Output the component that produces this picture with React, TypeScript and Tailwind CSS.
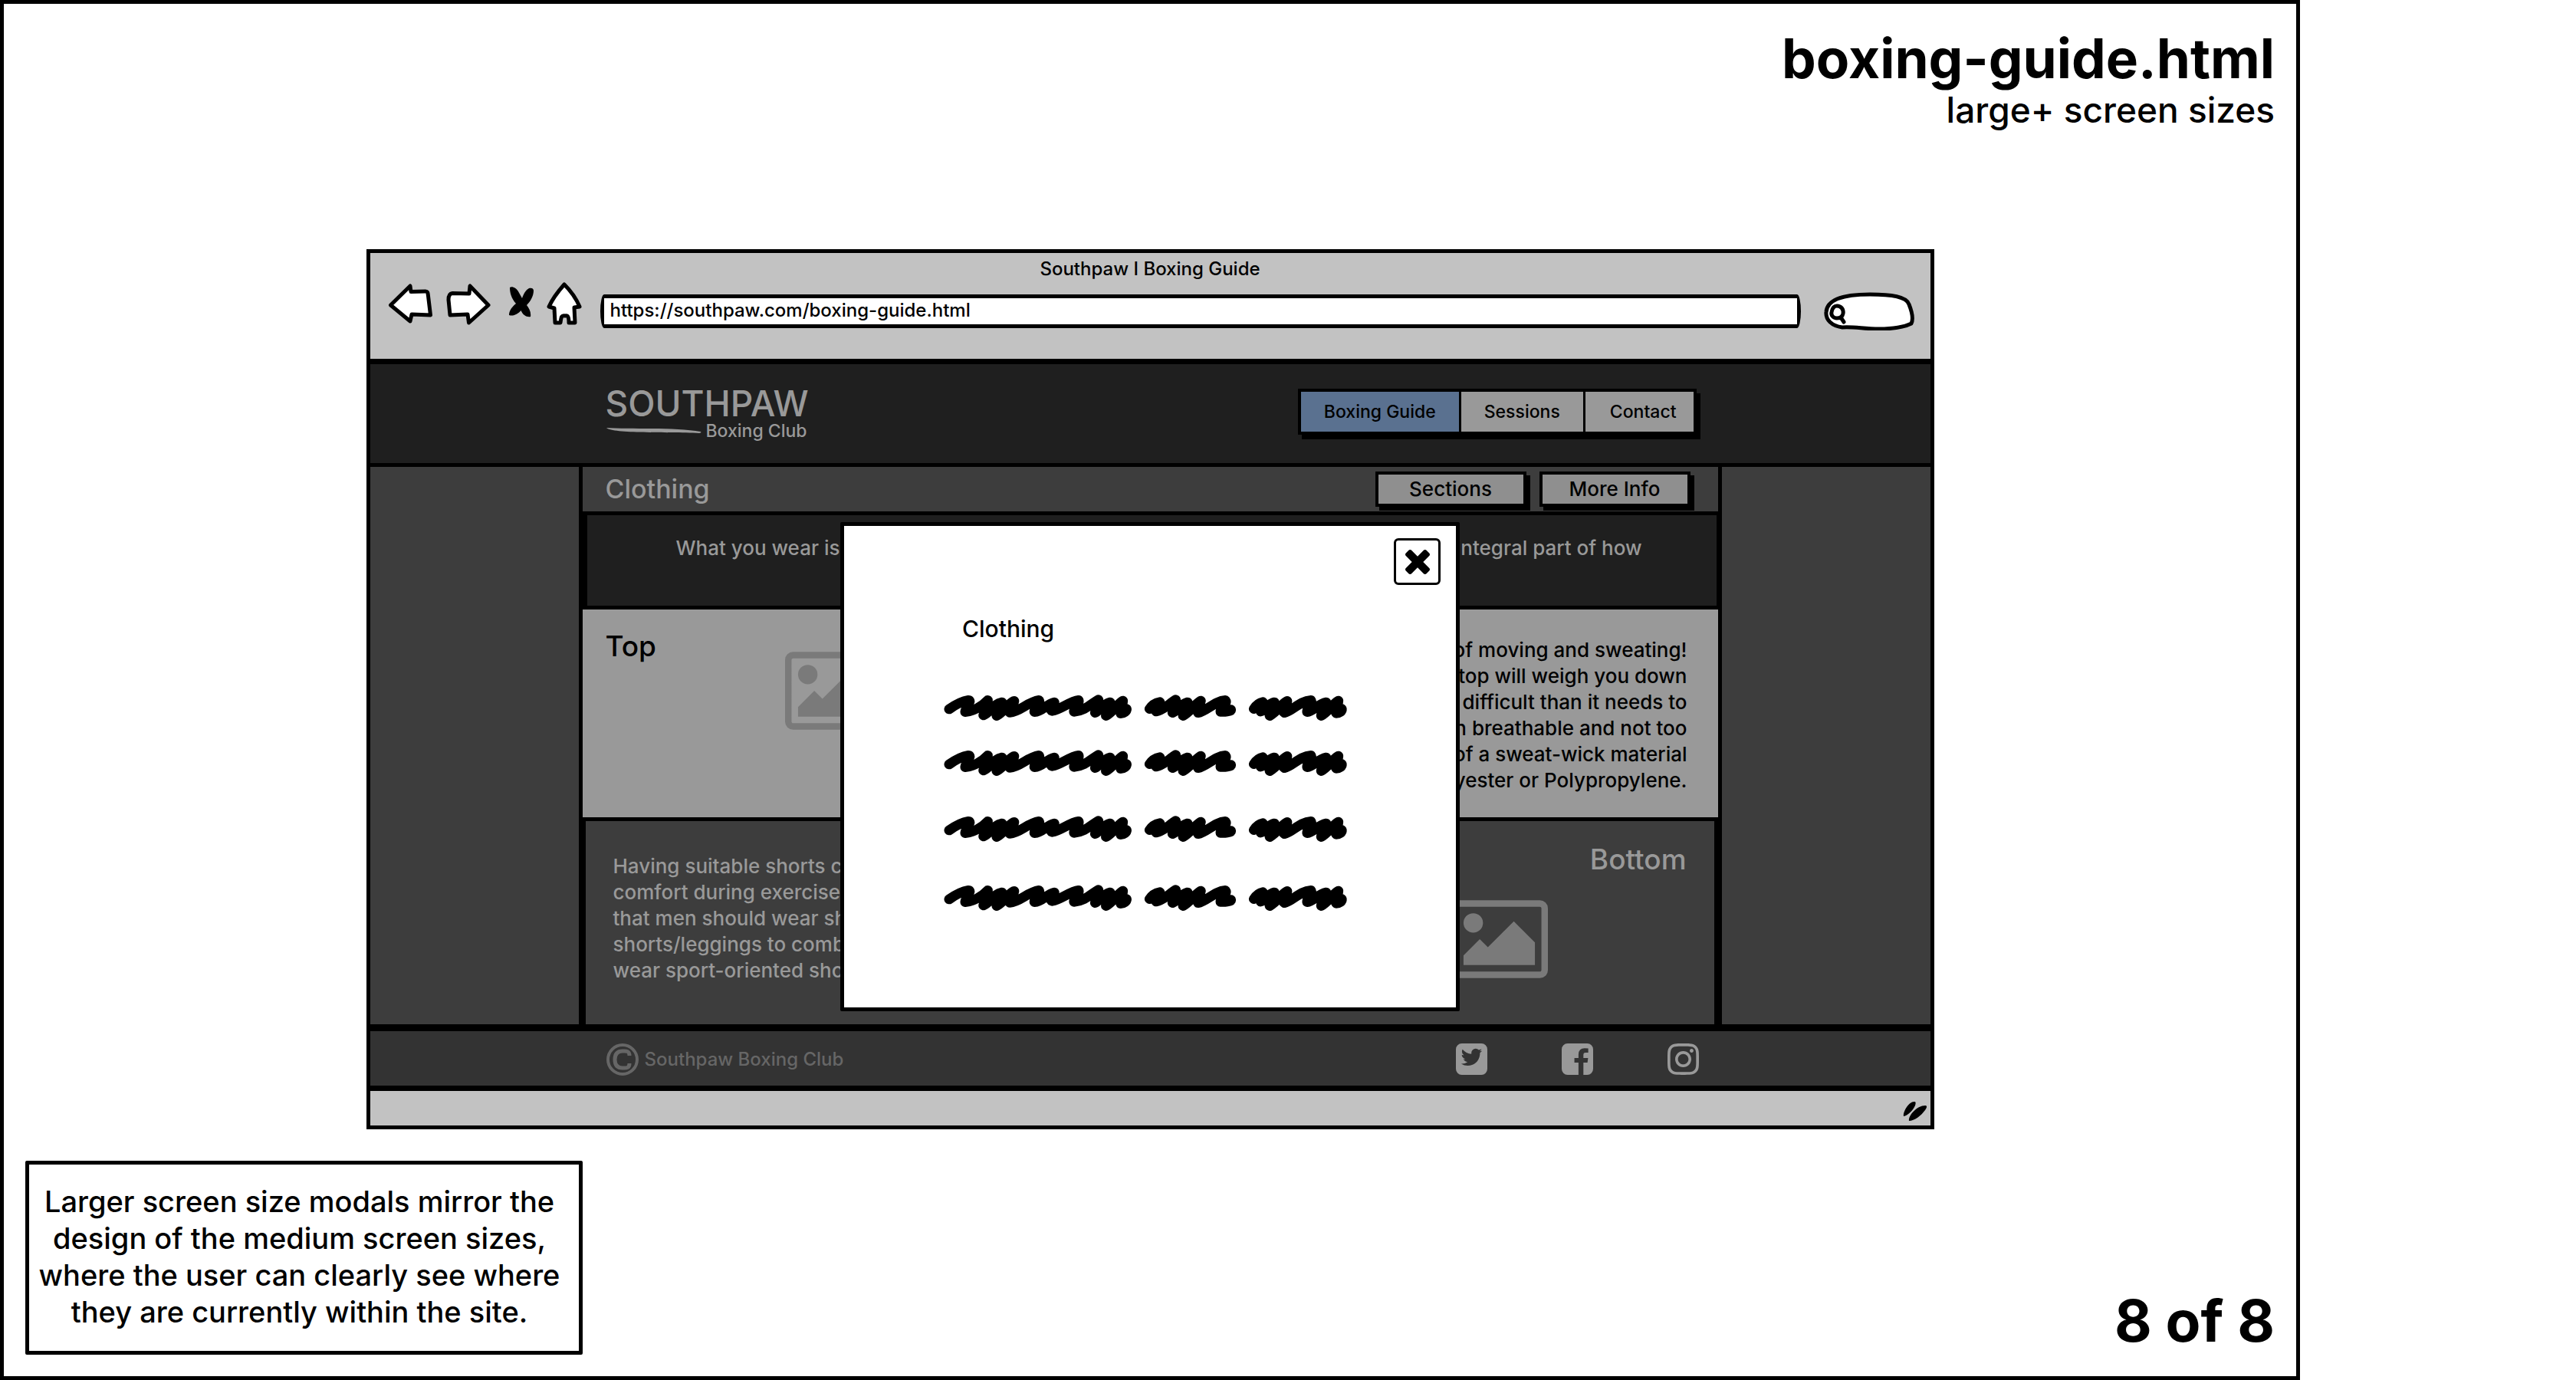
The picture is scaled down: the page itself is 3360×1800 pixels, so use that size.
import type { ReactNode } from "react";
import { FaInstagram } from "react-icons/fa";

const TOP_COPY = [
  "lots of moving and sweating!",
  "A heavy top will weigh you down",
  "and be more difficult than it needs to",
  "in breathable and not too",
  "made of a sweat-wick material",
  "Polyester or Polypropylene.",
];

const BOTTOM_COPY = [
  "Having suitable shorts can give",
  "comfort during exercise and",
  "that men should wear shorts",
  "shorts/leggings to combat",
  "wear sport-oriented shorts",
];

const NOTE = [
  "Larger screen size modals mirror the",
  "design of the medium screen sizes,",
  "where the user can clearly see where",
  "they are currently within the site.",
];

function Sketch({ className, viewBox, children }: { className: string; viewBox: string; children: ReactNode }) {
  return (
    <svg className={className} viewBox={viewBox} fill="currentColor" aria-hidden="true">
      {children}
    </svg>
  );
}

function ToolButton({ label, children }: { label: string; children: ReactNode }) {
  return (
    <button type="button" aria-label={label} className="block">
      {children}
    </button>
  );
}

function Outline({ className, viewBox, d }: { className: string; viewBox: string; d: string }) {
  return (
    <svg className={className} viewBox={viewBox} fill="#fff" stroke="#000" strokeWidth="5" strokeLinejoin="round" aria-hidden="true">
      <path d={d} />
    </svg>
  );
}

function Picture() {
  return (
    <Sketch className="h-[102px] w-[127px] shrink-0 text-[#7a7a7a]" viewBox="0 128 1920 1536">
      <path d="M640 576q0 80-56 136t-136 56-136-56-56-136 56-136 136-56 136 56 56 136zm1024 384v448h-1408v-192l320-320 160 160 512-512zm96-704h-1600q-13 0-22.5 9.5t-9.5 22.5v1216q0 13 9.5 22.5t22.5 9.5h1600q13 0 22.5-9.5t9.5-22.5v-1216q0-13-9.5-22.5t-22.5-9.5zm160 32v1216q0 66-47 113t-113 47h-1600q-66 0-113-47t-47-113v-1216q0-66 47-113t113-47h1600q66 0 113 47t47 113z" />
    </Sketch>
  );
}

function Scribble() {
  return (
    <svg
      className="block h-12 w-[540px]"
      viewBox="0 0 1568 144"
      preserveAspectRatio="none"
      fill="none"
      stroke="#000"
      strokeWidth="38"
      strokeLinecap="round"
      strokeLinejoin="round"
      aria-hidden="true"
    >
      <path d="M32 81C50 68 80 50 105 46C120 46 95 72 93 92C120 90 155 72 178 46C176 70 166 88 162 105C185 95 200 60 232 54C225 75 215 90 212 107C240 90 255 60 278 49C275 70 255 88 262 94C300 92 330 52 372 46C380 58 354 72 355 92C385 90 400 62 430 54C425 68 410 84 422 88C455 82 490 50 522 46C528 60 504 72 505 91C545 88 570 60 597 44C597 65 590 80 585 95C605 85 615 60 642 54C635 75 628 90 626 107C650 95 665 65 690 48C690 70 675 85 682 98C692 98 704 90 704 80" />
      <path d="M791 80C800 65 815 56 830 53C825 70 810 80 816 90C845 85 865 60 890 44C890 65 882 80 878 95C900 85 910 60 935 54C930 75 920 90 918 107C945 90 960 65 985 48C982 70 970 85 975 95C1005 90 1040 48 1078 46C1088 60 1060 72 1060 91C1075 92 1100 90 1099 83" />
      <path d="M1186 80C1195 65 1205 56 1220 53C1218 70 1205 80 1212 90C1230 85 1240 60 1264 54C1258 75 1248 90 1246 107C1275 90 1290 60 1312 49C1310 70 1290 88 1302 95C1330 90 1360 48 1402 46C1410 60 1386 75 1388 92C1410 90 1430 60 1460 54C1450 75 1443 90 1441 107C1465 95 1480 65 1506 48C1506 70 1490 85 1498 97C1510 97 1520 90 1519 80" />
    </svg>
  );
}

function BrowserChrome() {
  return (
    <div className="bg-[#c2c2c2] pt-1.5 pb-6">
      <p className="text-center text-2xl leading-[30px]">Southpaw I Boxing Guide</p>
      <div className="mt-0.5 flex items-center pr-5 pl-6">
        <div className="flex items-center pb-5">
          <ToolButton label="Back">
            <Outline className="h-14 w-[57px]" viewBox="0 -2 57 56" d="M2.5 28L28 3L29 10.5L48 10C51 10 51 12 51.500 16L54.500 41L30 40L28 49Z" />
          </ToolButton>
          <div className="ml-[18px] flex">
            <ToolButton label="Forward">
              <Outline className="h-14 w-[58px]" viewBox="0 -2 58 56" d="M55 28L31 3L30 13L8 12.500C4 13 3 16 3 21L5 41L28 40L29.500 51Z" />
            </ToolButton>
          </div>
          <div className="ml-6 flex">
            <ToolButton label="Stop">
              <Sketch className="mb-1 h-10 w-[33px]" viewBox="0 0 33 40">
                <path d="M1 1C4 -1 10 2 12.500 7L17 15C19 9 22 4 26 2C29 1 32 2 32 5C32 12 28 19 23 24C26 28 29 33 28 39C23 40 18 37 15.500 31C12 35 6 39 0 37C0 31 4 26 9 22C3 15 1 8 1 1Z" />
              </Sketch>
            </ToolButton>
          </div>
          <div className="ml-4 flex">
            <ToolButton label="Home">
              <Outline className="h-14 w-[46px]" viewBox="0 0 46 56" d="M23 3C31 11 38 20 43 32L36 33L37 53L29 53C29 46 28 43 24 44C19 43 19 46 18 53L11 53L10 34L3 32C8 21 15 12 23 3Z" />
            </ToolButton>
          </div>
        </div>
        <input
          type="text"
          readOnly
          aria-label="Address"
          defaultValue="https://southpaw.com/boxing-guide.html"
          className="ml-6 h-[44px] min-w-0 flex-1 rounded-[5px/50%] border-5 border-black bg-white px-2 pb-1 text-2xl leading-[30px] outline-none"
        />
        <div className="relative ml-[30px] h-[50px] w-[119px]">
          <svg className="absolute inset-0 h-full w-full" viewBox="0 0 119 50" fill="#fff" stroke="#000" strokeWidth="5" strokeLinecap="round" aria-hidden="true">
            <path d="M24 46C10 44 2 36 3 26C4 9 28 3 60 3C88 3 108 6 111 16C115 26 117 35 114 41C104 46 90 48 72 48C52 48 40 45 24 46Z" />
            <path d="M17 18C22 18 26 22 25 28C24 33 20 34 17 34C12 34 9 30 10 26C11 21 13 18 17 18ZM22 33L26 39" />
          </svg>
          <input type="text" aria-label="Search" className="absolute inset-y-2 right-3 left-9 bg-transparent text-2xl outline-none" />
        </div>
      </div>
    </div>
  );
}

function SiteHeader() {
  return (
    <header className="border-t-[7px] border-b-5 border-black bg-[#1f1f1f]">
      <div className="mx-auto flex h-[129px] w-full max-w-[1491px] items-start justify-between pt-7 pr-[33px] pl-[35px]">
        <div className="text-[#999]">
          <p className="text-[46px] leading-[46px]">SOUTHPAW</p>
          <div className="flex items-center gap-1.5">
            <Sketch className="h-2 w-[125px]" viewBox="0 0 125 8">
              <path d="M1 0C30 2 90-1 124 5C125 6 124 7 122 7C80 5 10 8 1 0Z" />
            </Sketch>
            <p className="text-[23px] leading-[26px]">Boxing Club</p>
          </div>
        </div>
        <nav className="mt-1 flex gap-[3px] border-4 border-black bg-black text-[23px] leading-[52px] text-black shadow-[5px_6px_0_#000]">
          <a href="#guide" className="bg-[#5a7190] px-[30px]">
            Boxing Guide
          </a>
          <a href="#sessions" className="bg-[#999] px-[30px]">
            Sessions
          </a>
          <a href="#contact" className="bg-[#999] pr-[22px] pl-8">
            Contact
          </a>
        </nav>
      </div>
    </header>
  );
}

function BarButton({ children }: { children: ReactNode }) {
  return (
    <button
      type="button"
      className="h-[46px] w-[197px] border-4 border-black bg-[#8f8f8f] text-[26px] leading-[38px] text-black shadow-[5px_5px_0_#000]"
    >
      {children}
    </button>
  );
}

function Article() {
  return (
    <main className="w-full max-w-[1491px] border-x-5 border-black bg-[#3d3d3d]">
      <div className="flex h-[58px] items-center justify-between pr-9 pl-[30px]">
        <h1 className="text-[34px] leading-10 text-[#999]">Clothing</h1>
        <div className="flex gap-[17px]">
          <BarButton>Sections</BarButton>
          <BarButton>More Info</BarButton>
        </div>
      </div>
      <div className="flex h-[128px] justify-between border-y-5 border-r-2 border-l-[6px] border-black bg-[#1f1f1f] pt-[26px] pr-[97px] pl-[116px] text-[26px] leading-[34px] text-[#999]">
        <p>What you wear isn't just</p>
        <p>an integral part of how</p>
      </div>
      <section className="flex h-[271px] items-start justify-between bg-[#999] pt-7 pr-10 pl-[30px] text-black">
        <div className="flex">
          <h2 className="w-[234px] text-[37px] leading-10">Top</h2>
          <div className="pt-[27px]">
            <Picture />
          </div>
        </div>
        <div className="pt-2 text-right text-[26px] leading-[34px]">
          {TOP_COPY.map((line) => (
            <p key={line}>{line}</p>
          ))}
        </div>
      </section>
      <section className="flex h-[270px] items-start justify-between border-t-5 border-r-5 border-l-4 border-black pt-[30px] pr-9 pl-9 text-[#999]">
        <div className="pt-3 text-[26px] leading-[34px]">
          {BOTTOM_COPY.map((line) => (
            <p key={line}>{line}</p>
          ))}
        </div>
        <div className="flex">
          <div className="pt-[73px]">
            <Picture />
          </div>
          <h2 className="w-[181px] text-right text-[37px] leading-10">Bottom</h2>
        </div>
      </section>
    </main>
  );
}

function SiteFooter() {
  return (
    <footer className="border-t-[9px] border-b-[7px] border-black bg-[#333]">
      <div className="mx-auto flex h-[71px] w-full max-w-[1491px] items-center justify-between pt-0.5 pr-[30px] pl-9">
        <div className="flex items-center gap-2 text-[#666]">
          <svg className="h-[42px] w-[42px]" viewBox="0 0 42 42" fill="none" stroke="currentColor" aria-hidden="true">
            <circle cx="21" cy="21" r="19" strokeWidth="4" />
            <path d="M30 16C30 9 25 10 21 10C14 10 11 14 11 21C11 28 14 32 21 32C25 32 30 33 30 26" strokeWidth="5" />
          </svg>
          <p className="text-2xl leading-[30px]">Southpaw Boxing Club</p>
        </div>
        <div className="flex items-center gap-[97px] text-[#999]">
          <a href="#twitter" aria-label="Twitter">
            <Sketch className="h-[41px] w-[41px]" viewBox="0 128 1536 1536">
              <path d="M1280 482q-56 25-121 34 68-40 93-117-65 38-134 51-61-66-153-66-87 0-148.500 61.500t-61.500 148.500q0 29 5 48-129-7-242-65t-192-155q-29 50-29 106 0 114 91 175-47-1-100-26v2q0 75 50 133.500t123 72.500q-29 8-51 8-13 0-39-4 21 63 74.500 104t121.500 42q-116 90-261 90-26 0-50-3 148 94 322 94 112 0 210-35.500t168-95 120.500-137 75-162 24.500-168.500q0-18-1-27 63-45 105-109zm256-66v960q0 119-84.500 203.500t-203.500 84.500h-960q-119 0-203.500-84.500t-84.500-203.500v-960q0-119 84.500-203.500t203.500-84.500h960q119 0 203.500 84.500t84.500 203.500z" />
            </Sketch>
          </a>
          <a href="#facebook" aria-label="Facebook">
            <Sketch className="h-[41px] w-[41px]" viewBox="0 128 1536 1536">
              <path d="M1248 128q119 0 203.500 84.500t84.500 203.500v960q0 119-84.500 203.500t-203.500 84.500h-188v-595h199l30-232h-229v-148q0-56 23.500-84t91.500-28l122-1v-207q-63-9-178-9-136 0-217.500 80t-81.500 226v171h-200v232h200v595h-532q-119 0-203.500-84.500t-84.500-203.500v-960q0-119 84.500-203.500t203.500-84.500h960z" />
            </Sketch>
          </a>
          <a href="#instagram" aria-label="Instagram">
            <FaInstagram className="h-[47px] w-[41px]" />
          </a>
        </div>
      </div>
    </footer>
  );
}

function Modal() {
  return (
    <div
      role="dialog"
      aria-labelledby="modal-title"
      className="absolute top-[213px] left-1/2 h-[638px] w-[808px] -translate-x-1/2 rounded-[2px] border-5 border-black bg-white"
    >
      <div className="flex justify-end pt-4 pr-5">
        <button type="button" aria-label="Close" className="flex h-[61px] w-[61px] items-center justify-center rounded-md border-3 border-black">
          <Sketch className="h-8 w-8" viewBox="302 366 1188 1188">
            <path d="M1490 1322q0 40-28 68l-136 136q-28 28-68 28t-68-28l-294-294-294 294q-28 28-68 28t-68-28l-136-136q-28-28-28-68t28-68l294-294-294-294q-28-28-28-68t28-68l136-136q28-28 68-28t68 28l294 294 294-294q28-28 68-28t68 28l136 136q28 28 28 68t-28 68l-294 294 294 294q28 28 28 68z" />
          </Sketch>
        </button>
      </div>
      <h2 id="modal-title" className="mt-9 pl-[154px] text-3xl leading-[42px]">
        Clothing
      </h2>
      <div className="pt-[57px] pl-[126px]">
        <Scribble />
        <div className="mt-6 mb-[38px]">
          <Scribble />
        </div>
        <div className="mb-[42px]">
          <Scribble />
        </div>
        <Scribble />
      </div>
    </div>
  );
}

export default function App() {
  return (
    <div className="min-h-screen bg-white font-['Inter',sans-serif] font-medium text-black">
      <div className="flex min-h-screen w-full max-w-[3000px] flex-col border-5 border-black pt-8 pb-6">
        <div className="pr-7 text-right">
          <p className="text-[71px] leading-[78px] font-bold">boxing-guide.html</p>
          <p className="text-[46px] leading-14">large+ screen sizes</p>
        </div>

        <div className="mx-auto mt-[154px] w-full max-w-[2045px] border-5 border-black bg-[#c2c2c2]">
          <BrowserChrome />
          <div className="relative">
            <SiteHeader />
            <div className="flex justify-center bg-[#3d3d3d]">
              <Article />
            </div>
            <SiteFooter />
            <Modal />
          </div>
          <div className="flex h-[45px] items-center justify-end pr-1">
            <Sketch className="mt-2 h-[27px] w-8" viewBox="0 0 32 27">
              <path d="M1 20C0 13 9 0 15 1C17 1 17 3 16 6C13 13 6 19 1 20ZM8 26C7 18 20 5 30 6C32 7 31 9 29 12C24 19 15 26 8 26Z" />
            </Sketch>
          </div>
        </div>

        <div className="mt-[41px] flex items-end justify-between pr-7 pl-7">
          <div className="w-[727px] rounded-[2px] border-5 border-black pt-6 pr-3 pb-[27px] text-center text-[38px] leading-12">
            {NOTE.map((line) => (
              <p key={line} className="whitespace-nowrap">
                {line}
              </p>
            ))}
          </div>
          <p className="text-[75px] leading-[88px] font-bold">8 of 8</p>
        </div>
      </div>
    </div>
  );
}
